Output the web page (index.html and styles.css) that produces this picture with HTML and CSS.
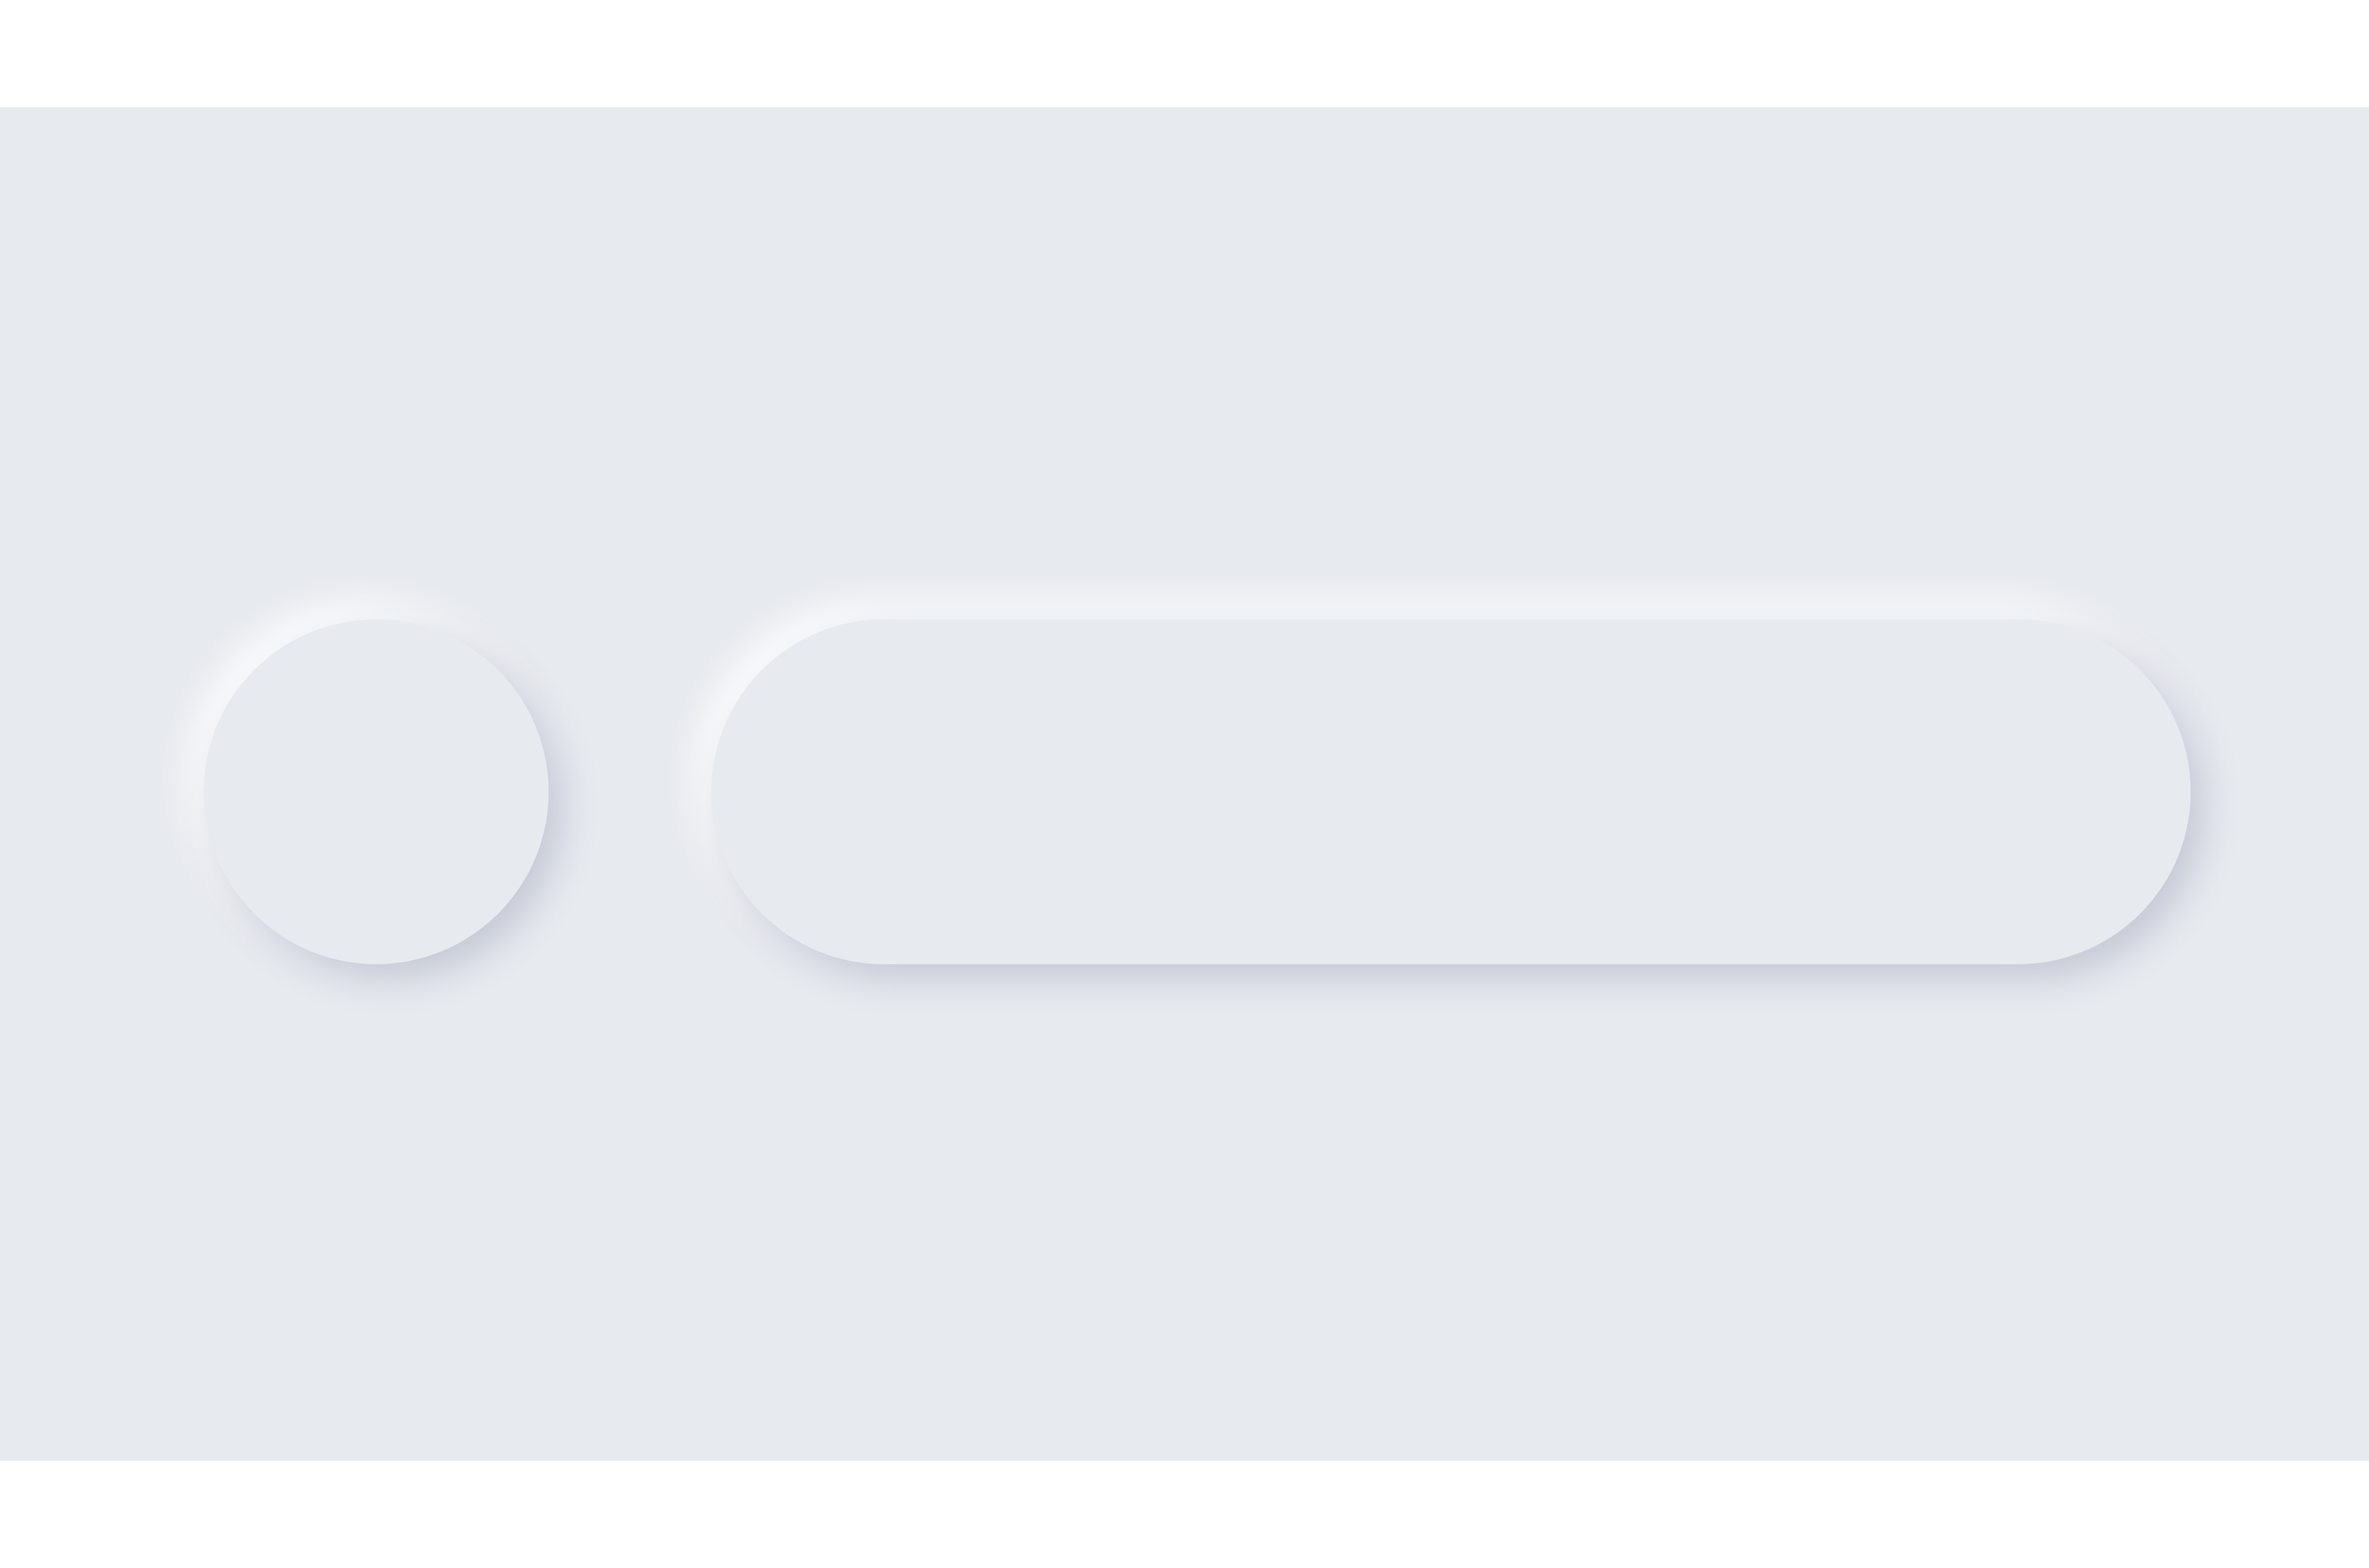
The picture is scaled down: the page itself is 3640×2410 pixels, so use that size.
FILE: index.html
```html
<!doctype html>
<html>

<head>
	<meta charset="utf-8">
	<title>neumorphism</title>
	<!--CSS-->
	<link rel="stylesheet" href="styles.css">
	<!--CSS-->
</head>

<body>
	<div class="stage">
		<div class="knob"></div>
		<div class="bar"></div>
	</div>
</body>

</html>
```

FILE: styles.css
```css
html,
body {
	margin: 0;
	height: 100%;
	background-color: #ffffff;
}

body {
	display: flex;
	align-items: center;
}

.stage {
	display: flex;
	align-items: center;
	box-sizing: border-box;
	width: 100%;
	height: 2080px;
	padding: 24px 0 0 313px;
	gap: 250px;
	background-color: #e7eaef;
}

.knob,
.bar {
	flex: none;
	height: 530px;
	border-radius: 265px;
	background-color: #e7eaef;
	box-shadow: 20px 22px 56px #c4c8d5, -20px -22px 56px #ffffff;
}

.knob {
	width: 530px;
}

.bar {
	width: 2273px;
}
```
